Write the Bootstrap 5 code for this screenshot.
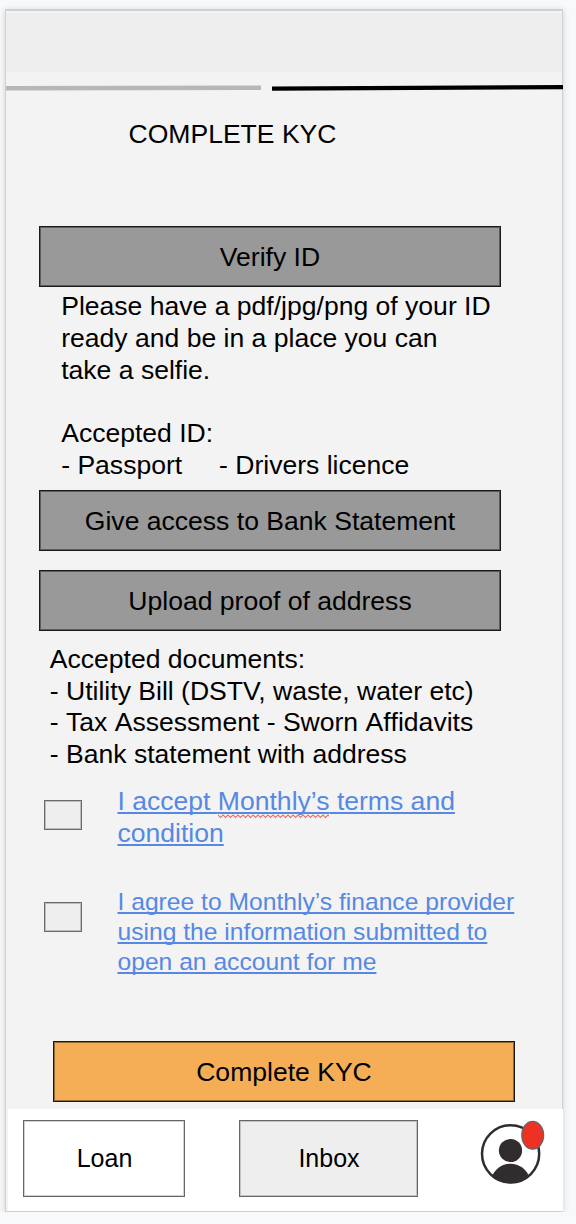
<!DOCTYPE html>
<html lang="en">
<head>
<meta charset="utf-8">
<meta name="viewport" content="width=device-width, initial-scale=1">
<title>Complete KYC</title>
<link href="https://cdn.jsdelivr.net/npm/bootstrap@5.3.0/dist/css/bootstrap.min.css" rel="stylesheet">
<style>
  body { background: #f8f9fb; font-family: "Liberation Sans", Arial, sans-serif; font-size: 26.55px; line-height: 31.75px; color: #000; overflow: hidden; }
  .screen { width: 558px; height: 1203px; margin: 9px 0 0 5px; background: #f3f3f3; border: 1px solid #d0d1d3; border-top-width: 2px; box-shadow: 0 1px 6px rgba(60,64,67,.22); }
  .top-strip { height: 59px; margin-top: 2px; background: #eee; }
  .steps { height: 20px; margin-right: -1px; }
  .title-line { margin: 26px 0 0 122.5px; font-size: inherit; line-height: 32px; }
  .btn-wire { width: 462px; height: 61px; margin-left: 33px; padding: 2px 0 0; border: 1px solid #1a1a1a; box-shadow: inset 0 0 0 1px rgba(0,0,0,.4); border-radius: 0; background: #999; color: #000; font-size: inherit; line-height: 32px; }
  .btn-wire:hover { background: #8f8f8f; border-color: #000; color: #000; }
  .btn-cta, .btn-cta:hover { background: #f5ae56; padding-top: 0; }
  .id-note { margin: 4.5px 0 0 55.2px; height: 198.5px; white-space: pre; }
  .doc-note { margin: 13px 0 0 43.8px; height: 142px; white-space: pre; }
  .unkerned { font-kerning: none; }
  .kerned { font-kerning: normal; }
  .consent { padding-left: 38px; }
  .form-check-input.box { width: 38px; height: 30px; margin: 0; border: 1px solid #6a6a6a; box-shadow: inset 0 0 0 1px rgba(0,0,0,.2); border-radius: 0; background-color: #eee; flex: none; }
  .consent a { color: #5688e4; text-decoration: underline; text-decoration-thickness: 2px; text-underline-offset: 2px; text-decoration-skip-ink: none; white-space: nowrap; margin-left: 35.5px; }
  .fine { font-size: 24.65px; line-height: 29.9px; }
  .misspelt svg { left: 0; top: 28px; width: 111px; height: 5px; }
  .tabs { height: 102px; margin: 7px -1px 0 2px; background: #fff; padding: 11px 0 0 15px; font-size: 25px; }
  .tab { height: 77px; border: 1px solid #666; box-shadow: inset 0 0 0 1px rgba(0,0,0,.18); border-radius: 0; padding: 1px 0 0 1px; color: #000; font-size: 25px; }
  .tab-loan { width: 162px; background: #fff; }
  .tab-inbox { width: 179px; margin-left: 54px; background: #eee; }
  .avatar { margin-left: 58px; }
</style>
<script src="https://cdn.jsdelivr.net/npm/bootstrap@5.3.0/dist/js/bootstrap.bundle.min.js"></script>
</head>
<body>
<main class="screen d-flex flex-column">
  <header>
    <div class="top-strip"></div>
    <div class="steps">
      <svg class="d-block" width="557" height="20" viewBox="6 72 557 20">
        <path d="M6 88.3 261 87.7" stroke="#b7b7b7" stroke-width="4.4"/>
        <path d="M272 88.6 563 87.2" stroke="#000" stroke-width="4.2"/>
      </svg>
    </div>
  </header>
  <h1 class="title-line fw-normal mb-0">COMPLETE KYC</h1>

  <button class="btn btn-wire" style="margin-top:76px">Verify ID</button>
  <div class="id-note">Please have a pdf/jpg/png of your ID
ready and be in a place you can
take a selfie.

Accepted ID:
- Passport     - Drivers licence</div>
  <button class="btn btn-wire">Give access to Bank Statement</button>
  <button class="btn btn-wire" style="margin-top:19px">Upload proof of address</button>
  <div class="doc-note">Accepted documents:
- Utility Bill (DSTV, waste, water etc)
<span class="unkerned">- <span class="kerned">Tax</span> Assessment - Sworn Affidavits</span>
- Bank statement with address</div>

  <div class="consent d-flex">
    <input class="form-check-input box" type="checkbox" aria-label="Accept terms" style="margin-top:14px">
    <a href="#">I accept <span class="misspelt position-relative d-inline">Monthly’s<svg class="position-absolute" viewBox="0 0 111 5"><defs><pattern id="wave" width="5" height="5" patternUnits="userSpaceOnUse"><path d="M-.5 .5 2.5 3.5 5.5 .5" fill="none" stroke="#e5706b" stroke-width="1.1"/></pattern></defs><rect width="111" height="5" fill="url(#wave)"/></svg></span> terms and<br>condition</a>
  </div>
  <div class="consent d-flex fine" style="margin-top:38px">
    <input class="form-check-input box" type="checkbox" aria-label="Agree to finance provider" style="margin-top:15px">
    <a href="#">I agree to Monthly’s finance provider<br>using the information submitted to<br>open an account for me</a>
  </div>

  <button class="btn btn-wire btn-cta" style="margin:64px 0 0 47px">Complete KYC</button>

  <nav class="tabs d-flex align-items-start">
    <button class="btn tab tab-loan">Loan</button>
    <button class="btn tab tab-inbox">Inbox</button>
    <svg class="avatar" width="76" height="70" viewBox="476 1120 76 70" role="img" aria-label="Profile">
      <defs><clipPath id="face"><circle cx="510.6" cy="1153.8" r="29.8"/></clipPath></defs>
      <circle cx="510.6" cy="1153.8" r="28.6" fill="#fff" stroke="#312d2e" stroke-width="2.5"/>
      <circle cx="510.5" cy="1150.5" r="11.6" fill="#312d2e"/>
      <path clip-path="url(#face)" d="M491 1179C494 1169 502 1163.8 510.5 1163.8S527 1169 530 1179V1183.4H491Z" fill="#312d2e"/>
      <ellipse cx="532.7" cy="1135.3" rx="10.9" ry="13.9" fill="#ee3124" stroke="#666" stroke-width="1.3"/>
    </svg>
  </nav>
</main>
</body>
</html>
